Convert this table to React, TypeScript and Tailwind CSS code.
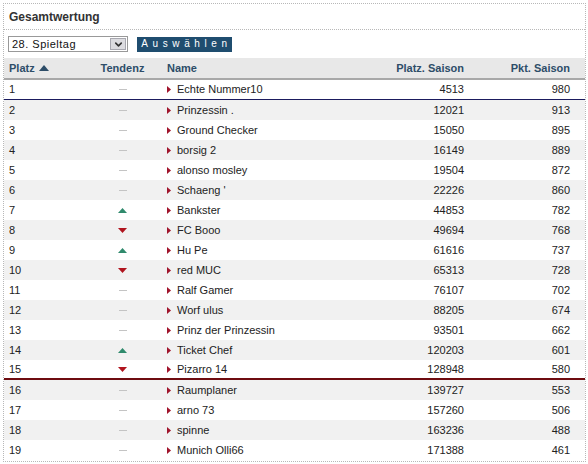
import { ChevronDown } from "lucide-react"

type Row = {
    platz: number
    trend: "up" | "down" | "same"
    name: string
    saisonPlatz: number
    punkte: number
}

const rows: Row[] = [
    { platz: 1, trend: "same", name: "Echte Nummer10", saisonPlatz: 4513, punkte: 980 },
    { platz: 2, trend: "same", name: "Prinzessin .", saisonPlatz: 12021, punkte: 913 },
    { platz: 3, trend: "same", name: "Ground Checker", saisonPlatz: 15050, punkte: 895 },
    { platz: 4, trend: "same", name: "borsig 2", saisonPlatz: 16149, punkte: 889 },
    { platz: 5, trend: "same", name: "alonso mosley", saisonPlatz: 19504, punkte: 872 },
    { platz: 6, trend: "same", name: "Schaeng '", saisonPlatz: 22226, punkte: 860 },
    { platz: 7, trend: "up", name: "Bankster", saisonPlatz: 44853, punkte: 782 },
    { platz: 8, trend: "down", name: "FC Booo", saisonPlatz: 49694, punkte: 768 },
    { platz: 9, trend: "up", name: "Hu Pe", saisonPlatz: 61616, punkte: 737 },
    { platz: 10, trend: "down", name: "red MUC", saisonPlatz: 65313, punkte: 728 },
    { platz: 11, trend: "same", name: "Ralf Gamer", saisonPlatz: 76107, punkte: 702 },
    { platz: 12, trend: "same", name: "Worf ulus", saisonPlatz: 88205, punkte: 674 },
    { platz: 13, trend: "same", name: "Prinz der Prinzessin", saisonPlatz: 93501, punkte: 662 },
    { platz: 14, trend: "up", name: "Ticket Chef", saisonPlatz: 120203, punkte: 601 },
    { platz: 15, trend: "down", name: "Pizarro 14", saisonPlatz: 128948, punkte: 580 },
    { platz: 16, trend: "same", name: "Raumplaner", saisonPlatz: 139727, punkte: 553 },
    { platz: 17, trend: "same", name: "arno 73", saisonPlatz: 157260, punkte: 506 },
    { platz: 18, trend: "same", name: "spinne", saisonPlatz: 163236, punkte: 488 },
    { platz: 19, trend: "same", name: "Munich Olli66", saisonPlatz: 171388, punkte: 461 },
]

function Trend({ t }: { t: Row["trend"] }) {
    if (t === "up")
        return (
            <svg width="9" height="5" viewBox="0 0 9 5">
                <polygon points="4.5,0 9,5 0,5" fill="#2f8a6c" />
            </svg>
        )
    if (t === "down")
        return (
            <svg width="9" height="5" viewBox="0 0 9 5">
                <polygon points="0,0 9,0 4.5,5" fill="#b0141e" />
            </svg>
        )
    return <span className="block w-[8px] h-px bg-[#c4c4c4]" />
}

const cols = "grid grid-cols-[86px_65px_182px_128px_120px]"

export default function App() {
    return (
        <div className="w-[588px] h-[464px] bg-white pt-[3px] pl-[3px] font-['Liberation_Sans',Arial,sans-serif] text-[11px] text-[#222]">
            <div className="w-[583px] h-[459px] border border-dotted border-[#b8b8b8] flex flex-col">
                <div className="h-[26px] border-b border-dotted border-[#b8b8b8] flex items-center pl-[5px]">
                    <h1 className="text-[12px] font-bold text-[#333]">Gesamtwertung</h1>
                </div>

                <div className="h-[28px] flex items-center pl-[4px] gap-[9px]">
                    <div className="w-[120px] h-[16px] border border-[#999] flex items-center justify-between pl-[3px] pr-[1px] bg-white">
                        <span className="tracking-[0.5px] text-[#111]">28. Spieltag</span>
                        <span className="w-[16px] h-[12px] bg-[#dcdce0] border border-[#a8a8b0] flex items-center justify-center">
                            <ChevronDown className="w-[11px] h-[11px] text-[#333]" strokeWidth={3.5} />
                        </span>
                    </div>
                    <button className="w-[95px] h-[15px] bg-[#1f4d6f] text-white text-[10px] tracking-[4.6px] flex items-center justify-center pl-[4px] leading-none">
                        Auswählen
                    </button>
                </div>

                <div className={`${cols} h-[22px] bg-[#e8e8e8] border-b-2 border-[#a8a8a8] items-center font-bold text-[#2d4d68]`}>
                    <div className="pl-[5px] flex items-center gap-[4px]">
                        Platz
                        <svg width="10" height="6" viewBox="0 0 10 6">
                            <polygon points="5,0 10,6 0,6" fill="#2d4d68" />
                        </svg>
                    </div>
                    <div className="text-center">Tendenz</div>
                    <div className="pl-[12px]">Name</div>
                    <div className="text-right pr-[1px]">Platz. Saison</div>
                    <div className="text-right pr-[15px]">Pkt. Saison</div>
                </div>

                {rows.map((r, i) => (
                    <div
                        key={r.platz}
                        className={`${cols} h-[20px] items-center ${i % 2 === 1 ? "bg-[#f1f1f1]" : "bg-white"} ${
                            r.platz === 1 ? "border-b border-[#1b1b5e]" : r.platz === 15 ? "border-b-2 border-[#6e0c10]" : ""
                        }`}
                    >
                        <div className="pl-[5px]">{r.platz}</div>
                        <div className="flex justify-center">
                            <Trend t={r.trend} />
                        </div>
                        <div className="pl-[12px] flex items-center gap-[6px]">
                            <svg width="4" height="7" viewBox="0 0 4 7">
                                <polygon points="0,0 4,3.5 0,7" fill="#a0142c" />
                            </svg>
                            <span>{r.name}</span>
                        </div>
                        <div className="text-right pr-[1px]">{r.saisonPlatz}</div>
                        <div className="text-right pr-[15px]">{r.punkte}</div>
                    </div>
                ))}
            </div>
        </div>
    )
}
